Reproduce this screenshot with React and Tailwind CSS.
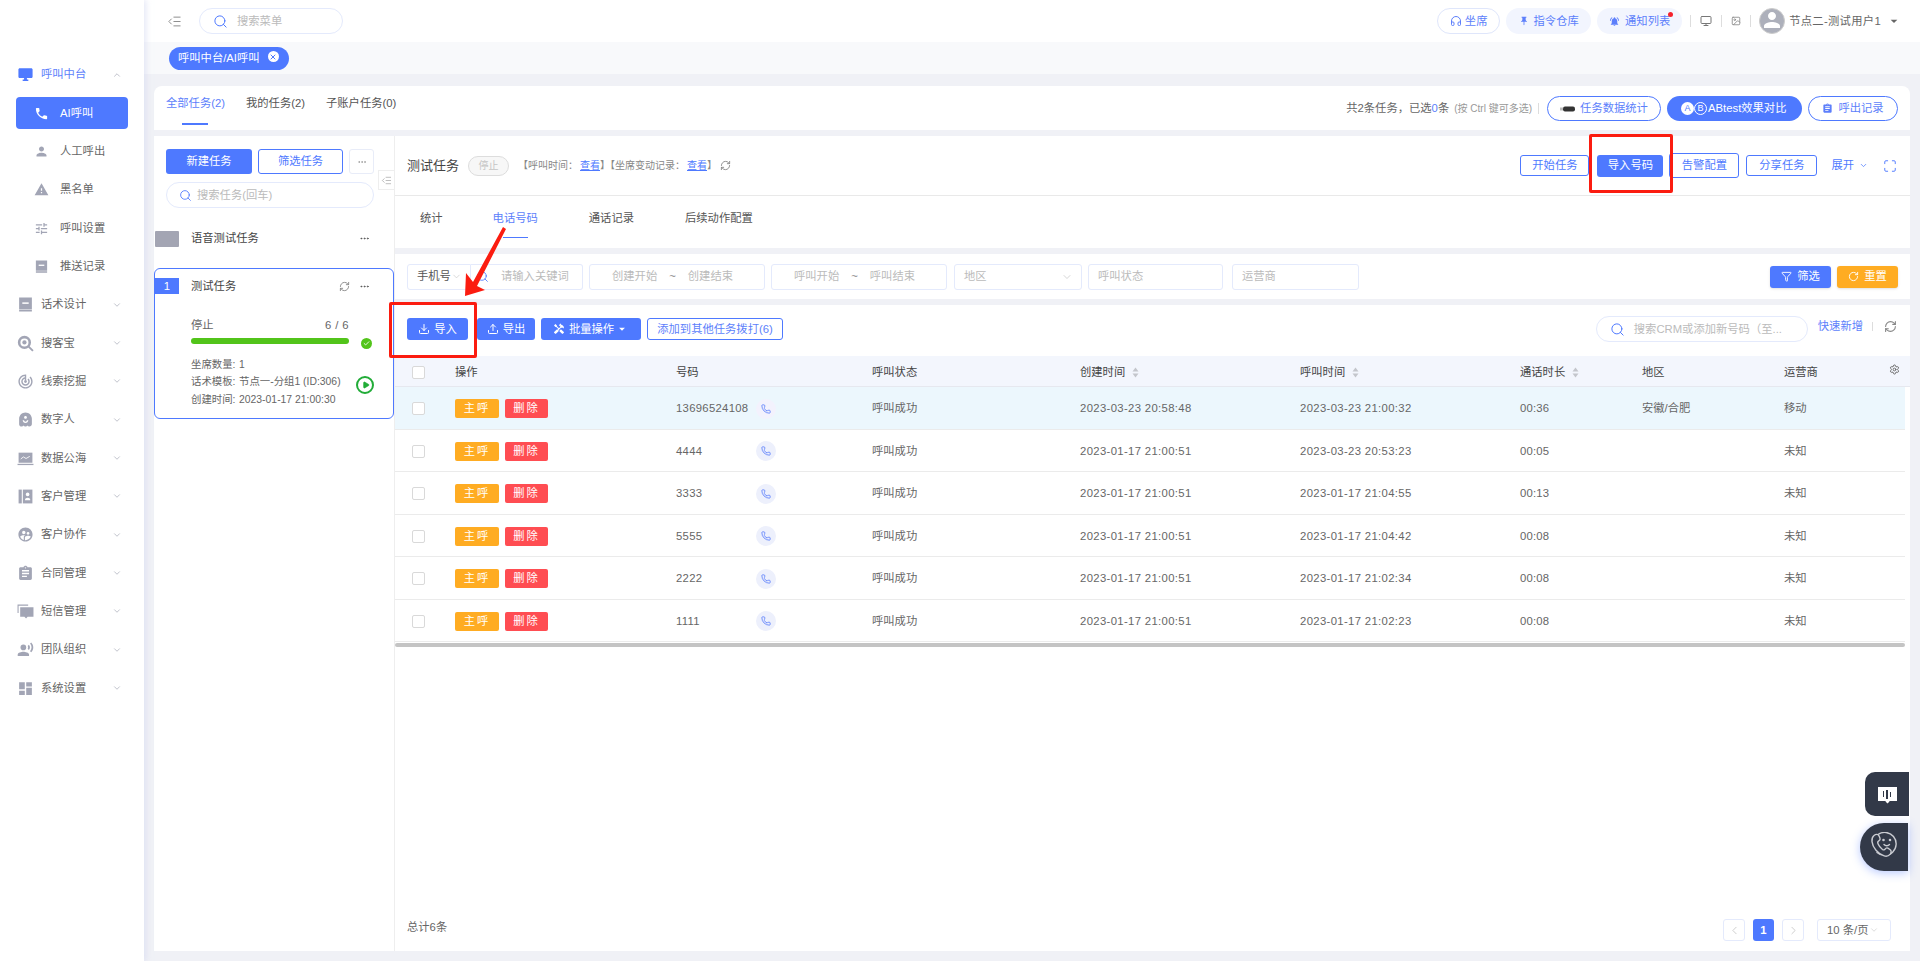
import React from "react";
import {
  Search, ChevronDown, ChevronUp, ChevronLeft, ChevronRight, RefreshCw, Ellipsis, Upload, Download, Filter, RotateCw, Settings, Maximize, Check, Play, X, IndentDecrease, Phone, Headphones, Monitor, Image as ImageIcon,
} from "lucide-react";
import {
  MdDesktopWindows, MdPhone, MdPerson, MdWarning, MdTune, MdTrackChanges, MdSupervisedUserCircle, MdAssignment, MdRecordVoiceOver, MdDashboard, MdPushPin, MdNotificationsActive, MdArrowDropDown, MdHandyman,
} from "react-icons/md";
import { RiGhostSmileFill } from "react-icons/ri";

function BookIcon({ size, className }) {
  return (
    <svg width={size} height={size} viewBox="0 0 16 16" className={className}>
      <path d="M2 1.5h12v11H2zM2 13h12v1.6H2z" fill="currentColor" />
      <path d="M5 6h6v1.4H5z" fill="#fff" />
    </svg>
  );
}
function SearchCircleIcon({ size, className }) {
  return (
    <svg width={size} height={size} viewBox="0 0 16 16" className={className}>
      <circle cx="7" cy="7" r="5" fill="none" stroke="currentColor" strokeWidth="2.4" />
      <circle cx="7" cy="7" r="2" fill="currentColor" />
      <path d="M10.5 10.5L15 15" stroke="currentColor" strokeWidth="1.8" />
    </svg>
  );
}
function LaptopIcon({ size, className }) {
  return (
    <svg width={size} height={size} viewBox="0 0 16 16" className={className}>
      <rect x="1.5" y="2.5" width="13" height="9.5" fill="currentColor" />
      <path d="M0.5 13h15v1.2H0.5z" fill="currentColor" />
      <path d="M3.5 8.5l2.5-2 2.5 1.5 3.5-2" fill="none" stroke="#fff" strokeWidth="0.8" />
    </svg>
  );
}
function ContactIcon({ size, className }) {
  return (
    <svg width={size} height={size} viewBox="0 0 16 16" className={className}>
      <rect x="1.5" y="1.5" width="3" height="13" fill="currentColor" />
      <rect x="5.5" y="1.5" width="9" height="13" fill="currentColor" />
      <circle cx="10" cy="6" r="1.7" fill="#fff" />
      <path d="M7.5 11.5c0-3 5-3 5 0z" fill="#fff" />
    </svg>
  );
}
function ChatIcon({ size, className }) {
  return (
    <svg width={size} height={size} viewBox="0 0 16 16" className={className}>
      <path d="M0.5 1.5h10v1h-9v7h-1z" fill="currentColor" />
      <path d="M3 4h12.5v9h-5.5l-1.5 1.6-1.5-1.6H3z" fill="currentColor" />
    </svg>
  );
}

const menu = [
  { t: "呼叫中台", I: MdDesktopWindows, active: true, open: true },
  { t: "AI呼叫", I: MdPhone, sub: true, cur: true },
  { t: "人工呼出", I: MdPerson, sub: true },
  { t: "黑名单", I: MdWarning, sub: true },
  { t: "呼叫设置", I: MdTune, sub: true },
  { t: "推送记录", I: BookIcon, sub: true },
  { t: "话术设计", I: BookIcon },
  { t: "搜客宝", I: SearchCircleIcon },
  { t: "线索挖掘", I: MdTrackChanges },
  { t: "数字人", I: RiGhostSmileFill },
  { t: "数据公海", I: LaptopIcon },
  { t: "客户管理", I: ContactIcon },
  { t: "客户协作", I: MdSupervisedUserCircle },
  { t: "合同管理", I: MdAssignment },
  { t: "短信管理", I: ChatIcon },
  { t: "团队组织", I: MdRecordVoiceOver },
  { t: "系统设置", I: MdDashboard },
];

const rows = [
  ["13696524108", "2023-03-23 20:58:48", "2023-03-23 21:00:32", "00:36", "安徽/合肥", "移动"],
  ["4444", "2023-01-17 21:00:51", "2023-03-23 20:53:23", "00:05", "", "未知"],
  ["3333", "2023-01-17 21:00:51", "2023-01-17 21:04:55", "00:13", "", "未知"],
  ["5555", "2023-01-17 21:00:51", "2023-01-17 21:04:42", "00:08", "", "未知"],
  ["2222", "2023-01-17 21:00:51", "2023-01-17 21:02:34", "00:08", "", "未知"],
  ["1111", "2023-01-17 21:00:51", "2023-01-17 21:02:23", "00:08", "", "未知"],
];

const gridCols = "grid grid-cols-[60px_221px_196px_208px_220px_220px_122px_142px_1fr] items-center";

function Sort() {
  return (
    <svg width="7" height="11" viewBox="0 0 7 11" className="ml-[7px]">
      <path d="M3.5 0.5 L6.5 4.5 H0.5 Z M3.5 10.5 L0.5 6.5 H6.5 Z" fill="#c4c6cc" />
    </svg>
  );
}

function Sidebar() {
  return (
    <aside className="w-[144px] shrink-0 bg-white pt-[55.5px] shadow-[2px_0_6px_rgba(210,215,240,0.6)] z-10">
      {menu.map((m) => (
        <div key={m.t} className="h-[38.35px] relative flex items-center">
          {m.cur && <div className="absolute left-4 right-4 top-[3px] bottom-[3px] rounded-[4px] bg-[#4e79ff]" />}
          <m.I
            size={m.sub ? 15 : 17}
            className={`relative shrink-0 ${m.sub ? "ml-[34px]" : "ml-[17px]"} ${m.cur ? "text-white" : m.active ? "text-[#4e79ff]" : "text-[#a2a5b5]"}`}
          />
          <span className={`relative ${m.sub ? "ml-[11px]" : "ml-[7px]"} ${m.cur ? "text-white" : m.active ? "text-[#5d7ffb]" : "text-[#666]"}`}>{m.t}</span>
          {!m.sub && (m.open ? (
            <ChevronUp size={10} strokeWidth={2} className="absolute left-[112px] text-[#b5b7c2]" />
          ) : (
            <ChevronDown size={10} strokeWidth={2} className="absolute left-[112px] text-[#b5b7c2]" />
          ))}
        </div>
      ))}
    </aside>
  );
}

function Header() {
  return (
    <header className="h-[42px] bg-white flex items-center shrink-0">
      <IndentDecrease size={15} strokeWidth={1.5} className="ml-[23px] text-[#888]" />
      <div className="ml-[17px] w-[144px] h-[26px] rounded-full border border-[#e4eafc] flex items-center">
        <Search size={15} strokeWidth={1.6} className="ml-[13px] text-[#4e79ff]" />
        <span className="ml-[9px] text-[#bbb]">搜索菜单</span>
      </div>
      <div className="ml-auto flex items-center">
        <div className="w-[63px] h-[26px] rounded-full border border-[#dfe6fb] flex items-center justify-center gap-[3px] text-[#5d7ffb]">
          <Headphones size={12} />坐席
        </div>
        <div className="ml-[6px] w-[85px] h-[26px] rounded-full bg-[#f2f5fe] flex items-center justify-center gap-[5px] text-[#5d7ffb]">
          <MdPushPin size={10} />指令仓库
        </div>
        <div className="ml-[6px] w-[85px] h-[26px] rounded-full bg-[#f2f5fe] flex items-center justify-center gap-[5px] text-[#5d7ffb] relative">
          <MdNotificationsActive size={11} />通知列表
          <span className="absolute right-[9px] top-[4px] w-[5px] h-[5px] rounded-full bg-[#f5222d]" />
        </div>
        <span className="ml-[8px] w-px h-[12px] bg-[#ddd]" />
        <Monitor size={12} className="ml-[9px] text-[#777]" />
        <span className="ml-[9px] w-px h-[12px] bg-[#ddd]" />
        <ImageIcon size={10} className="ml-[9px] text-[#888]" />
        <span className="ml-[9px] w-px h-[12px] bg-[#ddd]" />
        <div className="ml-[8px] w-[26px] h-[26px] rounded-full bg-[#adb0bb] border border-[#ccc] flex items-end justify-center overflow-hidden">
          <MdPerson size={26} className="text-white" />
        </div>
        <span className="ml-[4px] text-[#666] tracking-[0.3px]">节点二-测试用户1</span>
        <MdArrowDropDown size={16} className="ml-[5px] mr-[18px] text-[#666]" />
      </div>
    </header>
  );
}

function TaskPanel() {
  return (
    <div className="w-[241px] shrink-0 bg-white border-r border-[#eeeeee] relative">
      <div className="pl-3 pt-[13px] flex">
        <div className="w-[86px] h-[25px] rounded-[3px] bg-[#4e79ff] text-white flex items-center justify-center">新建任务</div>
        <div className="ml-[6px] w-[85px] h-[25px] rounded-[3px] border border-[#4e79ff] text-[#4e79ff] flex items-center justify-center">筛选任务</div>
        <div className="ml-[6px] w-[25px] h-[25px] rounded-[3px] border border-[#e8ecf8] text-[#999] flex items-center justify-center"><Ellipsis size={10} /></div>
      </div>
      <div className="ml-3 mt-[8px] w-[208px] h-[26px] rounded-full border border-[#e4eafc] flex items-center">
        <Search size={13} strokeWidth={1.6} className="ml-[12px] text-[#4e79ff]" />
        <span className="ml-[5px] text-[#bbb]">搜索任务(回车)</span>
      </div>
      <div className="absolute left-[224px] top-[34px] w-[17px] h-[20px] bg-white border border-[#eeeeee] flex items-center justify-center">
        <IndentDecrease size={11} strokeWidth={1.4} className="text-[#999]" />
      </div>
      <div className="mt-[22px] h-[17px] flex items-center">
        <span className="ml-px w-6 h-4 bg-[#a3a5b3] rounded-[1px]" />
        <span className="ml-3 text-[#444]">语音测试任务</span>
        <Ellipsis size={11} className="ml-auto mr-[24px] text-[#555]" />
      </div>
      <div className="mt-[21px] h-[151px] rounded-[6px] border border-[#4e79ff] relative pt-[9px]">
        <div className="flex items-center h-4">
          <span className="w-6 h-4 bg-[#4e79ff] text-white flex items-center justify-center">1</span>
          <span className="ml-3 text-[#444]">测试任务</span>
          <RefreshCw size={11} className="ml-auto text-[#888]" />
          <Ellipsis size={11} className="ml-[9px] mr-[23px] text-[#555]" />
        </div>
        <div className="ml-[36px] mr-[10px] mt-[23px] flex justify-between text-[#666] w-[158px]">
          <span>停止</span><span className="tracking-[0.4px]">6 / 6</span>
        </div>
        <div className="ml-[36px] flex items-center">
          <div className="w-[158px] h-[6px] rounded-full bg-[#52c41a]" />
          <span className="ml-[12px] mt-[4px] w-[11px] h-[11px] rounded-full bg-[#52c41a] flex items-center justify-center">
            <Check size={7} strokeWidth={3} className="text-white" />
          </span>
        </div>
        <div className="ml-[36px] mt-[7px] flex items-center">
          <div className="text-[#666] text-[10.4px] leading-[17.5px] whitespace-nowrap">
            <div className="flex"><span className="w-[48px]">坐席数量:</span><span>1</span></div>
            <div className="flex"><span className="w-[48px]">话术模板:</span><span>节点一-分组1 (ID:306)</span></div>
            <div className="flex"><span className="w-[48px]">创建时间:</span><span>2023-01-17 21:00:30</span></div>
          </div>
          <span className="absolute left-[201px] top-[107px] w-[18px] h-[18px] rounded-full border-2 border-[#22ac38] flex items-center justify-center">
            <Play size={8} className="text-[#22ac38] fill-[#22ac38] ml-px" />
          </span>
        </div>
      </div>
    </div>
  );
}

function DetailHeader() {
  return (
    <div className="h-[60px] bg-white border-b border-[#e9e9e9] pl-3 pr-[13px] flex items-center shrink-0">
      <span className="text-[13px] text-[#444]">测试任务</span>
      <span className="ml-[9px] w-[41px] h-[20px] rounded-full border border-[#ddd] bg-[#f7f7f7] text-[#c5c5c5] text-[10px] flex items-center justify-center">停止</span>
      <span className="ml-[9px] text-[10px] text-[#888]">【呼叫时间：</span>
      <span className="text-[10px] text-[#4e79ff] underline ml-[2px]">查看</span>
      <span className="text-[10px] text-[#888]">】【坐席变动记录：</span>
      <span className="text-[10px] text-[#4e79ff] underline ml-[2px]">查看</span>
      <span className="text-[10px] text-[#888]">】</span>
      <RefreshCw size={11} className="ml-[3px] text-[#888]" />
      <div className="ml-auto flex items-center">
        <div className="w-[69px] h-[21px] rounded-[3px] border border-[#4e79ff] text-[#4e79ff] flex items-center justify-center">开始任务</div>
        <div className="ml-2 w-[66px] h-[22px] rounded-[3px] bg-[#4e79ff] text-white flex items-center justify-center">导入号码</div>
        <div className="ml-[6px] w-[70px] h-[25px] rounded-[3px] border border-[#4e79ff] text-[#4e79ff] flex items-center justify-center">告警配置</div>
        <div className="ml-[7px] w-[71px] h-[21px] rounded-[3px] border border-[#4e79ff] text-[#4e79ff] flex items-center justify-center">分享任务</div>
        <span className="ml-[14px] text-[#4e79ff]">展开</span>
        <ChevronDown size={9} className="ml-[5px] text-[#4e79ff]" />
        <Maximize size={14} strokeWidth={1.6} className="ml-[15px] text-[#4e79ff]" />
      </div>
    </div>
  );
}

function DetailTabs() {
  const t = ["统计", "电话号码", "通话记录", "后续动作配置"];
  const ml = ["ml-[25px]", "ml-[50px]", "ml-[51px]", "ml-[51px]"];
  return (
    <div className="h-[52px] bg-white flex items-start shrink-0">
      {t.map((x, i) => (
        <div key={x} className={`${ml[i]} relative pt-[14px] ${i === 1 ? "text-[#5d7ffb]" : "text-[#555]"}`}>
          {x}
          {i === 1 && <span className="absolute left-[10px] w-[25px] top-[41px] h-px bg-[#4e79ff]" />}
        </div>
      ))}
    </div>
  );
}

function Field({ w, tone = "text-[#bbb]", className = "", children }) {
  return <div className={`h-[26px] border border-[#e4eafc] rounded-[3px] flex items-center ${tone} ${w} ${className}`}>{children}</div>;
}

function Filters() {
  return (
    <div className="h-[45px] bg-white flex items-center pl-3 pr-3 shrink-0">
      <Field w="w-[64px]" tone="text-[#555]" className="rounded-r-none pl-[9px]">手机号<ChevronDown size={11} strokeWidth={1.2} className="text-[#bbb]" /></Field>
      <Field w="w-[112px]" className="rounded-l-none border-l-0">
        <Search size={13} strokeWidth={1.6} className="ml-[5px] text-[#4e79ff]" />
        <span className="ml-[12px]">请输入关键词</span>
      </Field>
      <Field w="w-[176px]" className="ml-[6px] pl-[22px]"><span>创建开始</span><span className="ml-[12px] text-[#888]">~</span><span className="ml-[12px]">创建结束</span></Field>
      <Field w="w-[176px]" className="ml-[6px] pl-[22px]"><span>呼叫开始</span><span className="ml-[12px] text-[#888]">~</span><span className="ml-[12px]">呼叫结束</span></Field>
      <Field w="w-[128px]" className="ml-[7px] pl-[9px] justify-between pr-[8px]"><span>地区</span><ChevronDown size={12} strokeWidth={1.2} /></Field>
      <Field w="w-[135px]" className="ml-[6px] pl-[9px]">呼叫状态</Field>
      <Field w="w-[127px]" className="ml-[9px] pl-[9px]">运营商</Field>
      <div className="ml-auto flex">
        <div className="w-[61px] h-[22px] rounded-[3px] bg-[#4e79ff] text-white flex items-center justify-center gap-[5px] shadow-sm"><Filter size={11} />筛选</div>
        <div className="ml-[6px] w-[61px] h-[22px] rounded-[3px] bg-[#ffac22] text-white flex items-center justify-center gap-[5px] shadow-sm"><RotateCw size={11} />重置</div>
      </div>
    </div>
  );
}

function Table() {
  const heads = ["", "操作", "号码", "呼叫状态", "创建时间", "呼叫时间", "通话时长", "地区", "运营商"];
  return (
    <div className="flex-1 bg-white flex flex-col min-h-0">
      <div className="h-[51px] flex items-start pl-3 pr-[13px] pt-[13px] shrink-0">
        <div className="w-[61px] h-[22px] rounded-[3px] bg-[#4e79ff] text-white flex items-center justify-center gap-[4px]"><Download size={12} />导入</div>
        <div className="ml-[9px] w-[58px] h-[22px] rounded-[3px] bg-[#4e79ff] text-white flex items-center justify-center gap-[4px]"><Upload size={12} />导出</div>
        <div className="ml-[6px] w-[100px] h-[22px] rounded-[3px] bg-[#4e79ff] text-white flex items-center justify-center gap-[4px]">
          <MdHandyman size={12} />批量操作<MdArrowDropDown size={14} className="-ml-[3px]" />
        </div>
        <div className="ml-[6px] w-[136px] h-[22px] rounded-[3px] border border-[#4e79ff] text-[#5d7ffb] flex items-center justify-center">添加到其他任务拨打(6)</div>
        <div className="ml-auto -mt-[2px] w-[212px] h-[26px] rounded-full border border-[#e4eafc] flex items-center">
          <Search size={15} strokeWidth={1.6} className="ml-[13px] text-[#4e79ff]" />
          <span className="ml-[9px] text-[#bbb]">搜索CRM或添加新号码（至...</span>
        </div>
        <span className="ml-[10px] text-[#5d7ffb]">快速新增</span>
        <span className="ml-[9px] mt-[4px] w-px h-[9px] bg-[#ddd]" />
        <RefreshCw size={13} className="ml-[11px] mt-[2px] text-[#888]" />
      </div>
      <div className={`${gridCols} h-[31px] pt-[2px] bg-[#f3f6fd] border-b border-[#e6e8ef] text-[#444] shrink-0 relative`}>
        {heads.map((h, i) => (
          <div key={i} className="flex items-center">
            {i === 0 ? (
              <span className="ml-[17px] w-[13px] h-[13px] rounded-[2px] border border-[#d9d9d9] bg-white" />
            ) : (
              <>{h}{(i === 4 || i === 5 || i === 6) && <Sort />}</>
            )}
          </div>
        ))}
        <Settings size={11} className="absolute right-[10px] top-[8px] text-[#666]" />
      </div>
      {rows.map((r, idx) => (
        <div key={r[0]} className={`${gridCols} h-[42.5px] pt-[2px] w-[1510px] border-b border-[#ebebeb] text-[#666] shrink-0 ${idx === 0 ? "bg-[#ecf7fd]" : ""}`}>
          <div><span className="block ml-[17px] w-[13px] h-[13px] rounded-[2px] border border-[#d9d9d9] bg-white" /></div>
          <div className="flex">
            <span className="w-[44px] h-[19px] rounded-[2px] bg-[#ffac22] text-white tracking-[2px] flex items-center justify-center">主呼</span>
            <span className="ml-[6px] w-[43px] h-[19px] rounded-[2px] bg-[#ff4d52] text-white tracking-[2px] flex items-center justify-center">删除</span>
          </div>
          <div className="flex items-center tracking-[0.3px]">
            <span className="w-[80px]">{r[0]}</span>
            <span className={`w-[20px] h-[20px] rounded-full flex items-center justify-center ${idx === 0 ? "bg-[#f3f2fd]" : "bg-[#edf0fc]"}`}>
              <Phone size={10} className="text-[#5d7ffb]" />
            </span>
          </div>
          <div>呼叫成功</div>
          <div className="tracking-[0.35px]">{r[1]}</div>
          <div className="tracking-[0.35px]">{r[2]}</div>
          <div className="tracking-[0.2px]">{r[3]}</div>
          <div>{r[4]}</div>
          <div>{r[5]}</div>
        </div>
      ))}
      <div className="mt-[1px] w-[1510px] h-[4px] rounded-full bg-[#c4c4c4] shrink-0" />
      <div className="mt-auto h-[22px] mb-[10px] flex items-center pl-3 text-[#666] shrink-0">
        <span className="-translate-y-[3px]">总计6条</span>
        <div className="ml-auto flex items-center mr-[19px]">
          <span className="w-[22px] h-[22px] rounded-[3px] border border-[#e4eafc] flex items-center justify-center text-[#bbb]"><ChevronLeft size={13} strokeWidth={1.3} /></span>
          <span className="ml-[8px] w-[21px] h-[22px] rounded-[3px] bg-[#4e79ff] text-white font-bold flex items-center justify-center">1</span>
          <span className="ml-[8px] w-[22px] h-[22px] rounded-[3px] border border-[#e4eafc] flex items-center justify-center text-[#bbb]"><ChevronRight size={13} strokeWidth={1.3} /></span>
          <span className="ml-[13px] w-[74px] h-[22px] rounded-[3px] border border-[#e4eafc] flex items-center pl-[9px]">10 条/页<ChevronDown size={10} strokeWidth={1.2} className="text-[#bbb] ml-px" /></span>
        </div>
      </div>
    </div>
  );
}

export default function App() {
  return (
    <div className="relative flex h-[961px] w-full overflow-hidden bg-[#f0f1f6] text-[11.3px] font-['Liberation_Sans','Noto_Sans_CJK_SC',sans-serif]">
      <Sidebar />
      <div className="flex-1 min-w-0 flex flex-col">
        <Header />
        <div className="h-[32px] bg-[#f8f9fb] flex items-center shrink-0 pl-[25px]">
          <div className="w-[120px] h-[23px] rounded-full bg-[#4e79ff] text-white flex items-center pl-[9px]">
            呼叫中台/AI呼叫
            <span className="ml-[8px] -mt-[3px] w-[11px] h-[11px] rounded-full bg-white flex items-center justify-center"><X size={8} strokeWidth={3} className="text-[#4e79ff]" /></span>
          </div>
        </div>
        <main className="flex-1 min-h-0 pt-3 px-[10px] pb-[10px] flex flex-col">
          <div className="h-[44px] bg-white rounded-t-[8px] flex items-start shrink-0">
            <div className="ml-3 pt-[9px] h-[40px] relative text-[#5d7ffb]">全部任务(2)<span className="absolute left-[16px] w-[26px] top-[37px] h-[2px] bg-[#4e79ff]" /></div>
            <div className="ml-[21px] pt-[9px] text-[#555]">我的任务(2)</div>
            <div className="ml-[21px] pt-[9px] text-[#555]">子账户任务(0)</div>
            <div className="ml-auto mt-[10px] flex items-center pr-[12px]">
              <span className="text-[#666]">共2条任务，已选<span className="text-[#5d7ffb]">0</span>条</span>
              <span className="ml-[5px] text-[10px] text-[#999]">(按 Ctrl 键可多选)</span>
              <span className="ml-[6px] w-px h-[11px] bg-[#ddd]" />
              <div className="ml-[8px] w-[114px] h-[25px] rounded-full border border-[#4e79ff] text-[#5d7ffb] flex items-center justify-center gap-[5px]">
                <svg width="15" height="6" viewBox="0 0 15 6"><rect x="0" y="1.5" width="3" height="3" fill="#bbb" /><rect x="3" y="0.5" width="12" height="5" rx="2" fill="#333" /></svg>任务数据统计
              </div>
              <div className="ml-[6px] w-[135px] h-[25px] rounded-full bg-[#4e79ff] text-white flex items-center pl-[14px]">
                <span className="w-[13px] h-[13px] rounded-full bg-white text-[#4e79ff] flex items-center justify-center text-[9px]">A</span>
                <span className="w-[13px] h-[13px] rounded-full border border-white flex items-center justify-center text-[9px]">B</span>
                <span className="ml-[1px]">ABtest效果对比</span>
              </div>
              <div className="ml-[6px] w-[90px] h-[25px] rounded-full border border-[#4e79ff] text-[#5d7ffb] flex items-center justify-center gap-[5px]">
                <MdAssignment size={11} />呼出记录
              </div>
            </div>
          </div>
          <div className="mt-[6px] flex-1 min-h-0 flex">
            <TaskPanel />
            <div className="flex-1 min-w-0 flex flex-col gap-[6px]">
              <div className="flex flex-col shrink-0">
                <DetailHeader />
                <DetailTabs />
              </div>
              <Filters />
              <Table />
            </div>
          </div>
        </main>
      </div>

      {/* annotations and floating widgets */}
      <div className="absolute left-[1589px] top-[134px] w-[84px] h-[59px] border-[3px] border-[#fb1c10] rounded-[2px]" />
      <div className="absolute left-[389px] top-[302px] w-[88px] h-[56px] border-[3px] border-[#fb1c10] rounded-[2px]" />
      <svg className="absolute left-[455px] top-[220px]" width="60" height="80" viewBox="0 0 60 80">
        <path d="M48 7 L51 9 L22 66 L30 70 L10 76 L11 53 L18 62 Z" fill="#fb1c10" />
      </svg>
      <div className="absolute left-[1865px] top-[772px] w-[44px] h-[44px] rounded-l-[10px] bg-[#323948] flex items-center justify-center">
        <span className="relative w-[19px] h-[14px] bg-white flex items-center justify-center gap-[2px]">
          <i className="block w-[1.5px] h-[6px] bg-[#323948]" /><i className="block w-[1.5px] h-[9px] bg-[#323948]" /><i className="block w-[1.5px] h-[5px] bg-[#323948]" />
          <i className="absolute left-[8px] -bottom-[2px] w-[3px] h-[3px] rotate-45 bg-white" />
        </span>
      </div>
      <div className="absolute left-[1860px] top-[823px] w-[48px] h-[48px] rounded-l-[24px] bg-[#323948] shadow-[0_2px_10px_rgba(78,121,255,0.4)] flex items-center justify-center">
        <svg width="30" height="30" viewBox="0 0 30 30" fill="none" stroke="#c9cbd1" strokeWidth="1.4" strokeLinecap="round">
          <path d="M9 2.5a11.5 11.5 0 1 1 -1 18" />
          <path d="M5 3.5c2-1.6 4-1.4 5 .3l1 2.5c.4 1-.2 2-1.2 2.6-1 .6-1.4 1.5-.8 2.9 1 2.4 2.6 4.3 4.5 5.7 1 .7 2 .5 2.6-.4.7-1 1.8-1.500 2.8-.9l2 1.3c1.600 1 1.600 3 .3 4.600-1.400 1.600-3.500 2.600-6 1.800C9 22 3.600 15.500 3 9.600 2.700 7 3.400 4.800 5 3.500z" fill="#323948" />
          <path d="M15 12.500c1.500 1.600 4 1.600 5.500 0" />
          <circle cx="14.500" cy="8" r="0.6" fill="#c9cbd1" />
          <circle cx="21" cy="8" r="0.6" fill="#c9cbd1" />
        </svg>
      </div>
    </div>
  );
}
